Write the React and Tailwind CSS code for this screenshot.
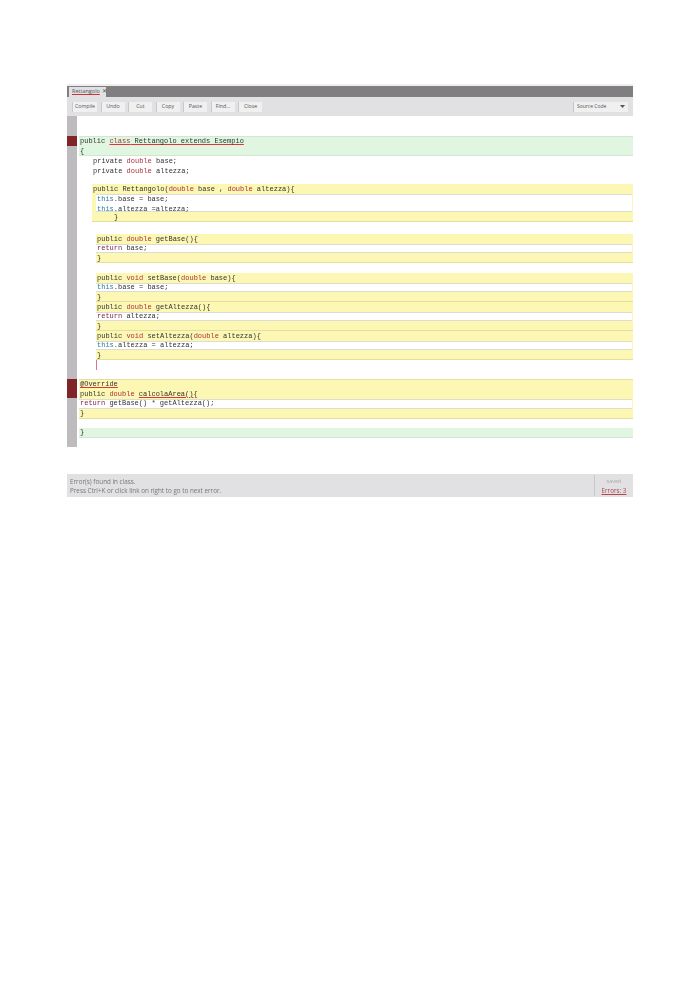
const KW = "text-[#a8323a]";
const THIS = "text-[#2b7aa6]";
const RET = "text-[#7a1f4a]";
const WHITE_ROW = "bg-white shadow-[inset_0_1px_0_#dcdcd0,inset_0_-1px_0_#dcdcd0] mr-[1px] pl-[1px]";

const BUTTONS = [
  { label: "Compile", w: "w-[25px]" },
  { label: "Undo", w: "w-[24px]" },
  { label: "Cut", w: "w-[24px]" },
  { label: "Copy", w: "w-[24px]" },
  { label: "Paste", w: "w-[24px]" },
  { label: "Find...", w: "w-[24px]" },
  { label: "Close", w: "w-[24px]" },
];

function Err({ children, className = "" }) {
  return <span className={`underline decoration-[#e0343a] decoration-1 underline-offset-1 ${className}`}>{children}</span>;
}

function Line({ children, className = "" }) {
  return <div className={`h-[9.7px] leading-[9.7px] whitespace-pre ${className}`}>{children}</div>;
}

// yellow method block: signature, white body, closing brace
function Method({ head, body, close = "}", bodyClass = "", bodyH = "h-[9px]" }) {
  return (
    <div className="bg-[#fdf7b4]">
      <div className="h-[10px] leading-[10px] whitespace-pre pl-[1px]">{head}</div>
      <div className={`${WHITE_ROW} ${bodyH} ${bodyClass}`}>
        {body.map((b, i) => <Line key={i}>{b}</Line>)}
      </div>
      <div className="h-[10px] leading-[10px] whitespace-pre pl-[1px] border-b border-[#e4dea0]">{close}</div>
    </div>
  );
}

export default function App() {
  return (
    <div className="min-h-[990px] bg-white pt-[84px] pl-[67px] font-['Liberation_Mono',monospace] text-[7px] text-[#333]">
      <div className="w-[566px] blur-[0.35px]">
        {/* tab strip */}
        <div className="h-[13px] bg-[#807e80] border-t-2 border-[#eeeeee] flex items-end pl-[2px] font-['Open_Sans',sans-serif]">
          <div className="w-[37px] h-[10px] bg-[#e1e0e2] flex items-center pl-[3px] gap-[2px] text-[5.5px] text-[#555]">
            <span className="underline decoration-[#c8343a] underline-offset-1 leading-none">Rettangolo</span>
            <span className="leading-none">✕</span>
          </div>
        </div>

        {/* toolbar */}
        <div className="h-[19px] bg-[#e1e0e2] flex items-center justify-between pl-[5px] pr-[5px] font-['Open_Sans',sans-serif] text-[5.25px] text-[#555]">
          <div className="flex gap-[3.5px]">
            {BUTTONS.map((b) => (
              <div key={b.label} className={`${b.w} h-[10px] bg-[#f0f0f1] border-l border-[#c9c8ca] flex items-center justify-center leading-none`}>
                {b.label}
              </div>
            ))}
          </div>
          <div className="w-[55px] h-[10px] bg-[#f0f0f1] border-l border-[#c4c3c5] flex items-center justify-between pl-[3px] pr-[3px] text-[5px] leading-none">
            <span>Source Code</span>
            <svg width="5" height="3" viewBox="0 0 5 3"><path d="M0 0h5L2.5 3z" fill="#555" /></svg>
          </div>
        </div>

        {/* editor */}
        <div className="flex h-[331px]">
          <div className="w-[10px] bg-[#bdbbbd] pt-[20px] shrink-0">
            <div className="h-[10px] bg-[#7f2427]" />
            <div className="h-[233px]" />
            <div className="h-[19px] bg-[#7f2427]" />
          </div>
          <div className="flex-1 pl-[2px] pt-[20px]">
            <div className="bg-[#e0f6e0] border-y border-[#cfe6cf] h-[20px]">
              <Line className="pl-[1px]">public <Err className="text-[#a8323a]">class</Err><Err> Rettangolo extends Esempio</Err></Line>
              <Line className="pl-[1px]">{"{"}</Line>
            </div>

            <div className="pl-[14px] pt-[1px] h-[28px]">
              <Line>private <span className={KW}>double</span> base;</Line>
              <Line>private <span className={KW}>double</span> altezza;</Line>
            </div>

            <div className="ml-[13px]">
              <Method
                bodyClass="ml-[4px] pt-[1px]"
                bodyH="h-[18px]"
                head={<>public Rettangolo(<span className={KW}>double</span> base , <span className={KW}>double</span> altezza){"{"}</>}
                body={[
                  <><span className={THIS}>this</span>.base = base;</>,
                  <><span className={THIS}>this</span>.altezza =altezza;</>,
                ]}
                close={"     }"}
              />
            </div>

            <div className="ml-[17px] mt-[12px]">
              <Method
                head={<>public <span className={KW}>double</span> getBase(){"{"}</>}
                body={[<><span className={RET}>return</span> base;</>]}
              />
              <div className="h-[10px]" />
              <Method
                head={<>public <span className={KW}>void</span> setBase(<span className={KW}>double</span> base){"{"}</>}
                body={[<><span className={THIS}>this</span>.base = base;</>]}
              />
              <Method
                head={<>public <span className={KW}>double</span> getAltezza(){"{"}</>}
                body={[<><span className={RET}>return</span> altezza;</>]}
              />
              <Method
                head={<>public <span className={KW}>void</span> setAltezza(<span className={KW}>double</span> altezza){"{"}</>}
                body={[<><span className={THIS}>this</span>.altezza = altezza;</>]}
              />
              <div className="w-px h-[10px] bg-[#e0709a]" />
            </div>

            <div className="mt-[9px] h-[39px] bg-[#fdf7b4] border-t border-[#e4dea0]">
              <Line className="pl-[1px]"><Err>@Override</Err></Line>
              <Line className="pl-[1px]">public <span className={KW}>double</span> <Err>calcolaArea()</Err>{"{"}</Line>
              <div className={`${WHITE_ROW} h-[9.5px]`}>
                <Line><span className={RET}>return</span> getBase() * getAltezza();</Line>
              </div>
              <Line className="pl-[1px] border-b border-[#e4dea0]">{"}"}</Line>
            </div>

            <div className="mt-[10px] bg-[#e0f6e0] border-b border-[#cfe6cf] h-[10px]">
              <Line className="pl-[1px]">{"}"}</Line>
            </div>
          </div>
        </div>

        {/* status bar */}
        <div className="mt-[27px] h-[23px] bg-[#e1e0e2] flex justify-between font-['Open_Sans',sans-serif] text-[6.3px] text-[#777]">
          <div className="pl-[3px] pt-[3px] leading-[9px]">
            <div>Error(s) found in class.</div>
            <div>Press Ctrl+K or click link on right to go to next error.</div>
          </div>
          <div className="w-[39px] my-[1px] border-l border-[#c9c8ca] flex flex-col items-center justify-center leading-[9px]">
            <span className="text-[#aaa] text-[5.5px]">saved</span>
            <span className="text-[#b0474c] underline">Errors: 3</span>
          </div>
        </div>
      </div>
    </div>
  );
}
